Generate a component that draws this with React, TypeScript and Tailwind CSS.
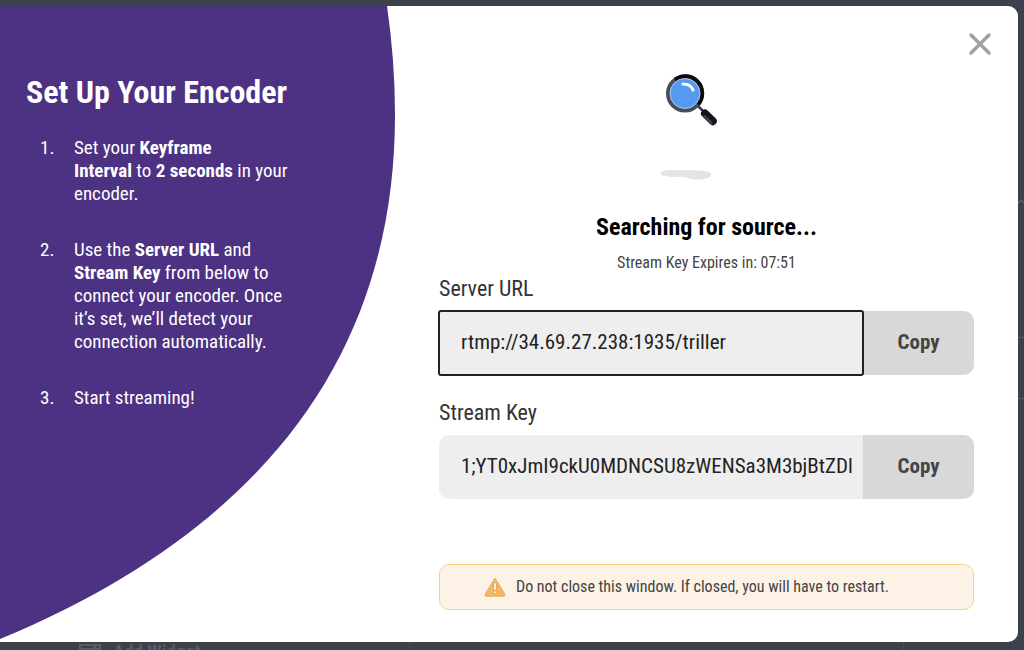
import { useState } from 'react';

const FONT = "font-['Roboto_Condensed','Roboto',sans-serif]";

const STEPS = [
  <>
    Set your <b>Keyframe Interval</b>&nbsp;to <b>2 seconds</b> in your encoder.
  </>,
  <>
    Use the <b>Server URL</b> and <b>Stream Key</b> from below to connect your encoder. Once it’s set, we’ll
    detect your connection automatically.
  </>,
  <>Start streaming!</>,
];

function MagnifierIllustration() {
  return (
    <svg viewBox="0 0 94 112" className="h-28 w-[94px]" aria-hidden="true">
      <path d="M36 32 L43 39" stroke="#3a3d46" strokeWidth="2.5" />
      <path d="M45 41.5 L52.8 49.2" stroke="#14161b" strokeWidth="8" strokeLinecap="round" />
      <path d="M44.5 44.5 L51 50.5" stroke="#3a414d" strokeWidth="3" strokeLinecap="round" />
      <circle cx="25" cy="21.5" r="17" fill="#5599f0" stroke="#4a4d58" strokeWidth="4" />
      <path d="M15 7.7 A17 17 0 0 1 38 32.5" fill="none" stroke="#0b0c10" strokeWidth="4" />
      <circle cx="25" cy="21.5" r="15" fill="#5599f0" stroke="#c9d8ee" strokeWidth="0.8" />
      <path d="M23 12 Q31 12 33 18" fill="none" stroke="#fff" strokeWidth="3" strokeLinecap="round" />
      <path d="M1 102 C1 97 12 98 25 98.5 C37 98 51 98 51 103 C51 108 32 109 27 105.5 C18 104.5 1 106 1 102Z" fill="#e3e3e9" />
    </svg>
  );
}

function WarningIcon() {
  return (
    <svg viewBox="0 0 22 20" className="h-5 w-[22px] shrink-0" aria-hidden="true">
      <path
        d="M11 1 L21 17.5 Q21.5 19.3 19.5 19.3 H2.5 Q0.5 19.3 1 17.5 Z"
        fill="#f3b860"
        stroke="#d9a95c"
        strokeWidth="0.8"
        strokeLinejoin="round"
      />
      <path d="M11 7 V12 M11 15.2 V15.6" stroke="#d9a95c" strokeWidth="3.4" strokeLinecap="round" />
      <path d="M11 7 V12 M11 15.2 V15.6" stroke="#fff4e0" strokeWidth="2" strokeLinecap="round" />
    </svg>
  );
}

interface CopyFieldProps {
  id: string;
  label: string;
  value: string;
  active?: boolean;
}

function CopyField({ id, label, value, active }: CopyFieldProps) {
  return (
    <div>
      <label htmlFor={id} className="block text-[22px] leading-7 text-[#333]">
        {label}
      </label>
      <div className="mt-2 flex h-16">
        <input
          id={id}
          readOnly
          defaultValue={value}
          className={`min-w-0 flex-1 bg-[#eee] pl-[22px] text-[21px] text-[#222] ${
            active
              ? 'z-10 rounded-[2px] outline-2 -outline-offset-1 outline-[#222]'
              : 'rounded-l-[10px] outline-none'
          }`}
        />
        <button
          type="button"
          onClick={() => navigator.clipboard?.writeText(value)}
          className="w-[111px] rounded-r-[10px] bg-[#d8d8d8] text-[21px] font-bold text-[#444]"
        >
          Copy
        </button>
      </div>
    </div>
  );
}

export default function App() {
  const [open, setOpen] = useState(true);

  return (
    <div className={`relative flex min-h-screen flex-col overflow-hidden bg-[#3d414b] ${FONT}`}>
      {/* Dimmed page behind the dialog */}
      <div className="absolute inset-x-0 top-full -mt-2.5 flex items-start gap-3 pl-[79px] text-[19px] leading-6 font-bold text-[#575c66]">
        <svg viewBox="0 0 22 18" className="mt-1 h-[18px] w-[22px]" aria-hidden="true">
          <rect width="22" height="18" fill="#575c66" />
          <path d="M2 3 H14 M17 3 H20" stroke="#3d414b" strokeWidth="2" />
        </svg>
        Add Widget
      </div>
      <div className="absolute right-[120px] bottom-0 left-[409px] h-7 border-x border-dashed border-[#4c515b]" />
      <svg viewBox="0 0 6 220" className="absolute top-48 right-0 h-[220px] w-1.5" fill="none" stroke="#5a606b" aria-hidden="true">
        <path d="M0 11 L3 8 L6 11" strokeWidth="1.5" />
        <path d="M0 145.5 H6 M0 206.5 H6" strokeDasharray="3 1" />
      </svg>

      {open && (
        <div
          role="dialog"
          aria-labelledby="encoder-title"
          className="relative mt-1.5 mr-1.5 mb-2 flex flex-1 overflow-hidden rounded-r-[10px] bg-white"
        >
          {/* Instructions */}
          <section className="relative w-[396px] shrink-0 text-white">
            <svg
              viewBox="0 0 396 636"
              preserveAspectRatio="none"
              className="absolute inset-0 h-full w-full"
              aria-hidden="true"
            >
              <path d="M0 0 H387 Q395 55 395 109 C395 320 292 512 0 633 Z" fill="#4d3182" />
            </svg>
            <div className="relative w-[292px] pt-16 pl-[26px]">
              <h1 id="encoder-title" className="text-[32px] leading-11 font-bold">
                Set Up Your Encoder
              </h1>
              <ol className="mt-[22px] space-y-[33px] pl-[14px] text-[19px] leading-[23px]">
                {STEPS.map((step, i) => (
                  <li key={i} className="flex">
                    <span className="w-[34px] shrink-0">{i + 1}.</span>
                    <span>{step}</span>
                  </li>
                ))}
              </ol>
            </div>
          </section>

          {/* Source status */}
          <section className="flex min-w-0 flex-1 flex-col pt-[66px] pr-11 pl-[43px]">
            <div className="flex flex-col items-center">
              <MagnifierIllustration />
              <h2 className="mt-[27px] text-2xl leading-8 font-bold text-black">Searching for source...</h2>
              <p className="mt-2 text-base leading-6 text-[#444]">Stream Key Expires in: 07:51</p>
            </div>
            <div className="space-y-6">
              <CopyField id="server-url" label="Server URL" value="rtmp://34.69.27.238:1935/triller" active />
              <CopyField id="stream-key" label="Stream Key" value="1;YT0xJmI9ckU0MDNCSU8zWENSa3M3bjBtZDl" />
            </div>
            <p className="mt-[65px] flex h-[46px] items-center gap-2.5 rounded-[10px] border border-[#f5d580] bg-[#fcf2e6] pl-11 text-base text-[#444]">
              <WarningIcon />
              Do not close this window. If closed, you will have to restart.
            </p>
          </section>

          <button
            type="button"
            aria-label="Close"
            onClick={() => setOpen(false)}
            className="absolute top-6 right-6 p-0.5 text-[#a0a0a0]"
          >
            <svg viewBox="0 0 24 24" className="size-6" fill="none" stroke="currentColor" strokeWidth="3.4" strokeLinecap="round">
              <path d="M3 3 L21 21 M21 3 L3 21" />
            </svg>
          </button>
        </div>
      )}
    </div>
  );
}
